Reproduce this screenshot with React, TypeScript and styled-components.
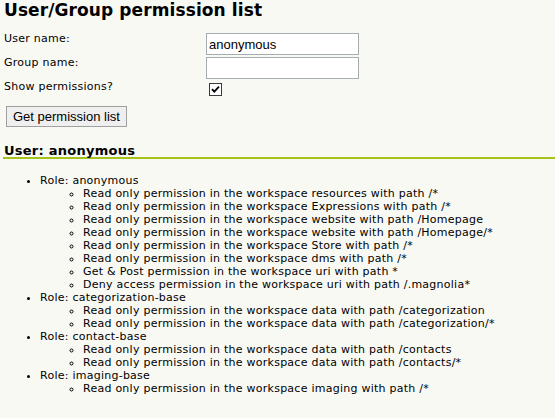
import React from 'react'
import styled, { createGlobalStyle } from 'styled-components'

const GlobalStyle = createGlobalStyle`
  html, body {
    margin: 0;
    padding: 0;
    background-color: #f9f9f4;
  }

  body {
    font-family: 'DejaVu Sans', Verdana, sans-serif;
    font-size: 11px;
    letter-spacing: 0.25px;
    color: #000;
  }
`

interface Role {
  name: string
  permissions: string[]
}

const roles: Role[] = [
  {
    name: 'anonymous',
    permissions: [
      'Read only permission in the workspace resources with path /*',
      'Read only permission in the workspace Expressions with path /*',
      'Read only permission in the workspace website with path /Homepage',
      'Read only permission in the workspace website with path /Homepage/*',
      'Read only permission in the workspace Store with path /*',
      'Read only permission in the workspace dms with path /*',
      'Get & Post permission in the workspace uri with path *',
      'Deny access permission in the workspace uri with path /.magnolia*',
    ],
  },
  {
    name: 'categorization-base',
    permissions: [
      'Read only permission in the workspace data with path /categorization',
      'Read only permission in the workspace data with path /categorization/*',
    ],
  },
  {
    name: 'contact-base',
    permissions: [
      'Read only permission in the workspace data with path /contacts',
      'Read only permission in the workspace data with path /contacts/*',
    ],
  },
  {
    name: 'imaging-base',
    permissions: ['Read only permission in the workspace imaging with path /*'],
  },
]

const Page = styled.div`
  padding: 0 0 0 3px;
`

const Title = styled.h1`
  margin: 0;
  padding: 0 1px;
  font-size: 17px;
  line-height: 21px;
  font-weight: bold;
  letter-spacing: 0.1px;
`

const Form = styled.form`
  display: grid;
  grid-template-columns: 202px 153px;
  grid-auto-rows: 24px;
  margin: 12px 0 0 1px;
`

const Label = styled.label`
  line-height: 13px;
  align-self: start;
  margin-top: -1px;
`

const TextInput = styled.input`
  box-sizing: border-box;
  width: 153px;
  height: 22px;
  margin: 0;
  padding: 1px 2px;
  border: 1px solid #a5acb2;
  background: #fff;
  font-family: 'Liberation Sans', Arial, sans-serif;
  font-size: 13px;
  letter-spacing: 0;
  color: #000;
  outline: none;
`

const CheckWrap = styled.label`
  position: relative;
  display: inline-flex;
  align-self: start;
  justify-self: start;
  margin: 2px 0 0 3px;
`

const HiddenInput = styled.input`
  position: absolute;
  opacity: 0;
  width: 13px;
  height: 13px;
  margin: 0;
`

const CheckBox = styled.span`
  box-sizing: border-box;
  display: flex;
  align-items: center;
  justify-content: center;
  width: 13px;
  height: 13px;
  border: 1px solid #3a3a3a;
  background: #fff;
`

const SubmitButton = styled.button`
  grid-column: 1 / span 2;
  justify-self: start;
  align-self: start;
  margin: 1px 0 0 2px;
  height: 21px;
  padding: 0 6px;
  border: 1px solid #a0a0a0;
  background: #efefef;
  font-family: 'Liberation Sans', Arial, sans-serif;
  font-size: 13px;
  letter-spacing: 0;
  color: #000;
`

const UserHeading = styled.h2`
  margin: 15px 0 0;
  padding: 0 0 0 1px;
  font-size: 13px;
  line-height: 13px;
  font-weight: bold;
`

const Rule = styled.div`
  height: 2px;
  background: #a6c21a;
`

const RoleList = styled.ul`
  margin: 15px 0 0;
  padding: 0 0 0 37px;
  list-style: disc;
  line-height: 13px;
`

const PermissionList = styled.ul`
  margin: 0;
  padding: 0 0 0 43px;
  list-style: circle;
`

function App() {
  return (
    <Page>
      <GlobalStyle />
      <Title>User/Group permission list</Title>
      <Form onSubmit={(e) => e.preventDefault()}>
        <Label htmlFor='user'>User name:</Label>
        <TextInput id='user' defaultValue='anonymous' />
        <Label htmlFor='group'>Group name:</Label>
        <TextInput id='group' />
        <Label htmlFor='show'>Show permissions?</Label>
        <CheckWrap>
          <HiddenInput id='show' type='checkbox' defaultChecked />
          <CheckBox>
            <svg width='9' height='9' viewBox='0 0 9 9'>
              <path d='M1 4.2 L3.3 6.6 L8 1.6' fill='none' stroke='#000' strokeWidth='1.8' />
            </svg>
          </CheckBox>
        </CheckWrap>
        <SubmitButton type='submit'>Get permission list</SubmitButton>
      </Form>

      <UserHeading>User: anonymous</UserHeading>
      <Rule />
      <RoleList>
        {roles.map((role) => (
          <li key={role.name}>
            Role: {role.name}
            <PermissionList>
              {role.permissions.map((p) => (
                <li key={p}>{p}</li>
              ))}
            </PermissionList>
          </li>
        ))}
      </RoleList>
    </Page>
  )
}

export default App
